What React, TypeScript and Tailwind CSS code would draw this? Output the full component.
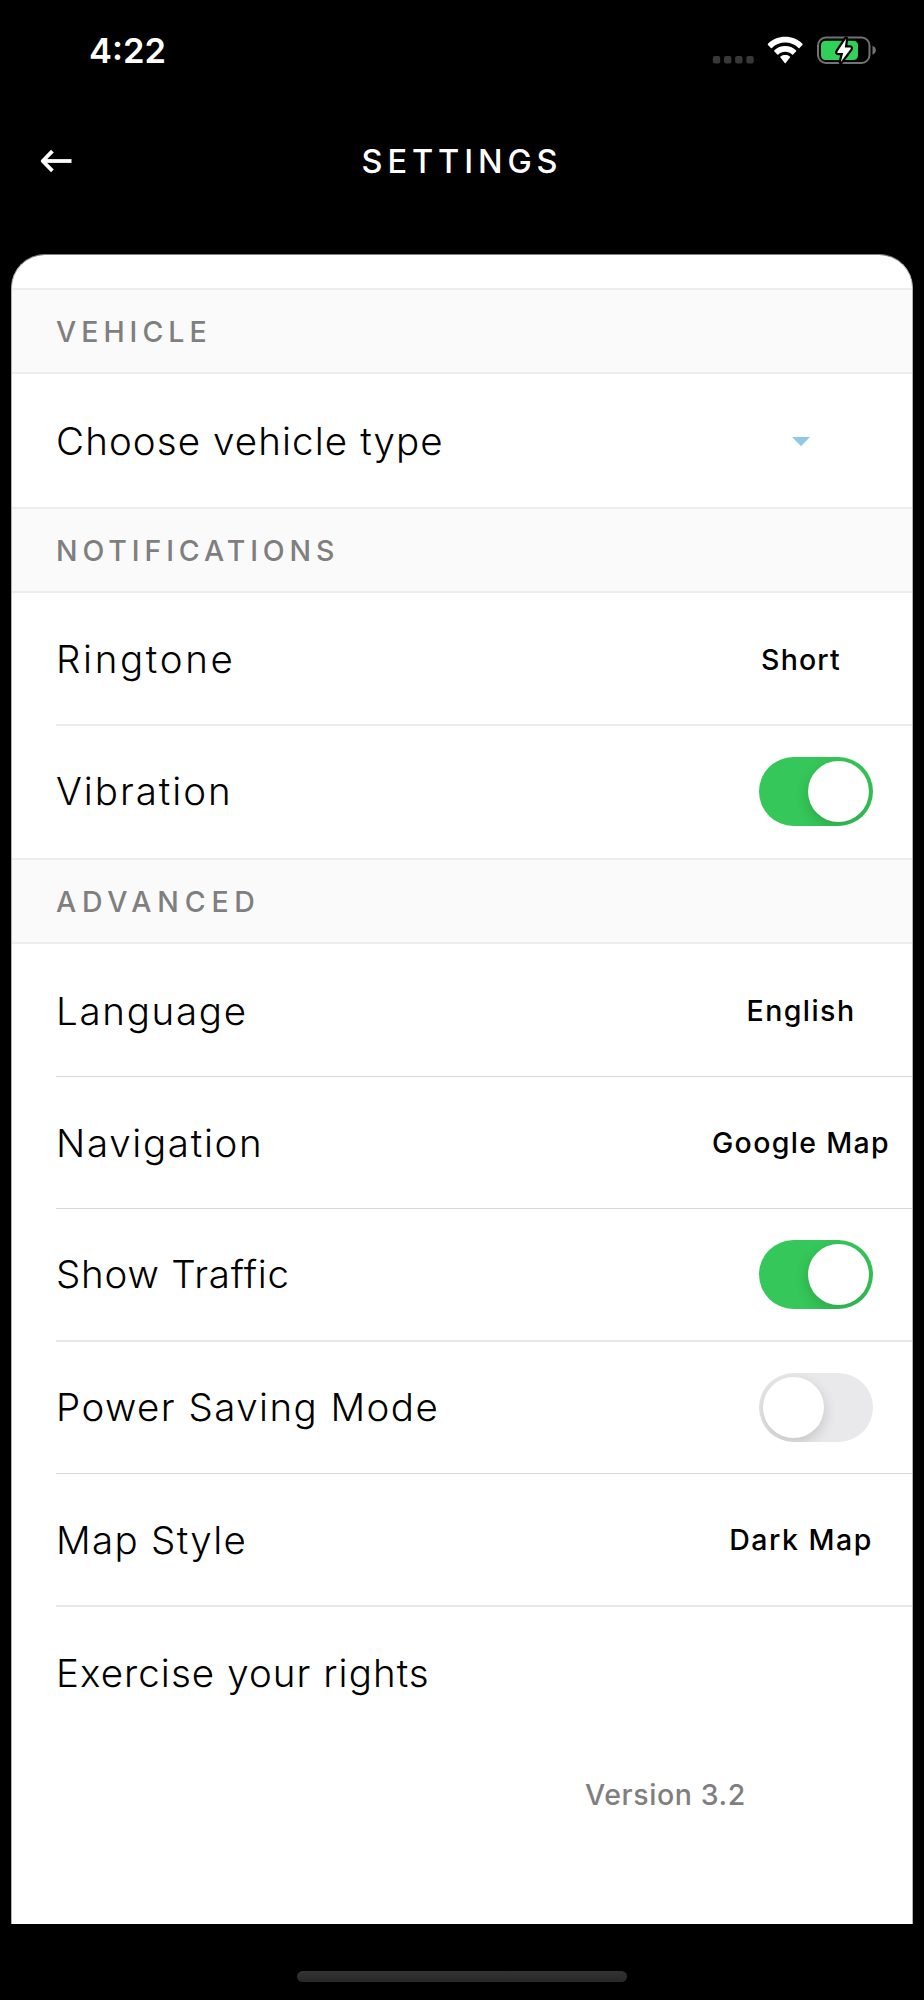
import { ReactNode, useState } from "react";
import { clsx } from "clsx";

function StatusBar() {
  return (
    <div className="flex h-[101px] items-center justify-between pl-[89px] pr-[48px] text-white">
      <span className="pt-0.5 text-[34.5px] font-semibold leading-none">4:22</span>
      <svg width="164" height="32" viewBox="712 35 164 32" fill="none">
        {/* signal */}
        <g fill="#383838">
          <rect x="712.8" y="56" width="7.4" height="7.4" rx="2" />
          <rect x="724" y="56" width="7.4" height="7.4" rx="2" />
          <rect x="735.1" y="56" width="7.4" height="7.4" rx="2" />
          <rect x="746.3" y="56" width="7.4" height="7.4" rx="2" />
        </g>
        {/* wifi */}
        <g fill="#fff">
          <path d="M785.2 42.6C790.4 42.6 795 44.6 798.5 47.9C798.8 48.2 799.2 48.2 799.5 47.9L802.4 45C802.8 44.6 802.8 44.1 802.4 43.7C797.9 39.4 791.9 36.8 785.2 36.8C778.5 36.8 772.5 39.4 768 43.7C767.6 44.1 767.6 44.6 768 45L770.9 47.9C771.2 48.2 771.6 48.2 771.9 47.9C775.4 44.6 780 42.6 785.2 42.6Z" />
          <path d="M785.2 51.8C787.9 51.8 790.3 52.8 792.1 54.4C792.4 54.7 792.8 54.7 793.1 54.4L796 51.5C796.4 51.1 796.4 50.6 796 50.2C793.2 47.6 789.4 46 785.2 46C781 46 777.2 47.6 774.4 50.2C774 50.6 774 51.1 774.4 51.5L777.3 54.4C777.6 54.7 778 54.7 778.3 54.4C780.1 52.8 782.5 51.8 785.2 51.8Z" />
          <path d="M789.9 57.6C790.3 57.2 790.3 56.7 789.8 56.4C788.5 55.5 786.9 55 785.2 55C783.5 55 781.9 55.5 780.6 56.4C780.1 56.7 780.1 57.2 780.5 57.6L784.7 62.9C785 63.2 785.4 63.2 785.7 62.9Z" />
        </g>
        {/* battery */}
        <rect x="818" y="37.5" width="51.5" height="25.5" rx="8" stroke="#737373" strokeWidth="2" />
        <rect x="821" y="40.8" width="37" height="19.2" rx="4.5" fill="#30d158" />
        <path d="M872.5 45.8C874.6 46.6 875.8 48.3 875.8 50.3C875.8 52.3 874.6 54 872.5 54.8Z" fill="#737373" />
        <path
          d="M846 38.8L837.4 51.7C837 52.3 837.3 52.9 838 52.9H843.2L840.8 62L850.6 48.9C851.1 48.2 850.8 47.6 850 47.6H844.8Z"
          fill="#fff"
          stroke="#000"
          strokeWidth="4.5"
          strokeLinejoin="round"
          paintOrder="stroke"
        />
      </svg>
    </div>
  );
}

function Header() {
  return (
    <header className="grid h-[121px] grid-cols-[1fr_auto_1fr] items-center px-10 text-white">
      <button type="button" aria-label="Back" className="w-8 pb-0.5">
        <svg width="32" height="24" viewBox="0 0 32 24" fill="none" stroke="currentColor" strokeWidth="3.8">
          <path d="M31.5 12H3" />
          <path d="M12.4 2.2L2.7 12L12.4 21.8" strokeLinejoin="round" />
        </svg>
      </button>
      <h1 className="pt-0.5 text-[32.5px] font-medium leading-none tracking-[4.9px]">SETTINGS</h1>
    </header>
  );
}

function SectionTitle({ children, className }: { children: ReactNode; className?: string }) {
  return (
    <h2
      className={clsx(
        "flex h-[86px] items-center border-y-2 border-[#ededed] bg-[#fafafa] pl-11 pt-0.5",
        "text-[28.5px] font-medium leading-none text-[#7f7f7f]",
        className
      )}
    >
      {children}
    </h2>
  );
}

interface RowProps {
  label: string;
  /** Height, divider and letter spacing of the row */
  className?: string;
  children?: ReactNode;
}

function Row({ label, className, children }: RowProps) {
  return (
    <div
      className={clsx(
        "ml-11 flex items-center justify-between text-[38.5px] font-light leading-none text-black",
        className
      )}
    >
      <span>{label}</span>
      <div className="flex w-[222px] justify-center">{children}</div>
    </div>
  );
}

function Value({ children, className }: { children: ReactNode; className: string }) {
  return (
    <span className={clsx("whitespace-nowrap pt-px text-[28.5px] font-medium", className)}>{children}</span>
  );
}

function Toggle({ label, defaultOn = false }: { label: string; defaultOn?: boolean }) {
  const [on, setOn] = useState(defaultOn);

  return (
    <button
      type="button"
      role="switch"
      aria-label={label}
      aria-checked={on}
      onClick={() => setOn(!on)}
      className={clsx(
        "ml-[30px] flex h-[69px] w-[114px] items-center overflow-hidden rounded-full px-1",
        on ? "justify-end bg-[#35c759]" : "justify-start bg-[#e9e9eb]"
      )}
    >
      <span className="size-[61px] rounded-full bg-white shadow-[0_5px_14px_rgba(0,0,0,0.16)]" />
    </button>
  );
}

export default function App() {
  return (
    <div className="flex h-[2000px] w-[924px] flex-col bg-black font-['Inter',sans-serif]">
      <StatusBar />
      <Header />

      <main className="ml-[11px] mt-8 h-[1670px] w-[902px] overflow-hidden rounded-t-[34px] border-x border-t border-x-[#b0b0b0] border-t-[#808080] bg-white pt-[33px]">
        <SectionTitle className="tracking-[5px]">VEHICLE</SectionTitle>
        <Row label="Choose vehicle type" className="h-[133px] pt-px tracking-[1.1px]">
          <svg width="18" height="10" viewBox="0 0 18 10" className="mt-px">
            <path d="M0 0H18L9 9.3Z" fill="#8ecae6" />
          </svg>
        </Row>

        <SectionTitle className="tracking-[4.9px]">NOTIFICATIONS</SectionTitle>
        <Row label="Ringtone" className="h-[133px] border-b-2 border-[#ebebeb] pt-0.5 tracking-[2.65px]">
          <Value className="tracking-[1.18px]">Short</Value>
        </Row>
        <Row label="Vibration" className="h-[132px] pb-0.5 tracking-[1.95px]">
          <Toggle label="Vibration" defaultOn />
        </Row>

        <SectionTitle className="tracking-[5.8px]">ADVANCED</SectionTitle>
        <Row label="Language" className="h-[133px] border-b border-[#d6d6d6] pt-0.5 tracking-[1.7px]">
          <Value className="tracking-[1.45px]">English</Value>
        </Row>
        <Row label="Navigation" className="h-[132px] border-b border-[#d6d6d6] pt-px tracking-[1.7px]">
          <Value className="tracking-[1.33px]">Google Map</Value>
        </Row>
        <Row label="Show Traffic" className="h-[133px] border-b-2 border-[#e8e8e8] tracking-[0.77px]">
          <Toggle label="Show Traffic" defaultOn />
        </Row>
        <Row label="Power Saving Mode" className="h-[132px] border-b border-[#d6d6d6] tracking-[1.44px]">
          <Toggle label="Power Saving Mode" />
        </Row>
        <Row label="Map Style" className="h-[133px] border-b-2 border-[#e8e8e8] pt-px tracking-[1.32px]">
          <Value className="tracking-[1.5px]">Dark Map</Value>
        </Row>
        <Row label="Exercise your rights" className="h-[132px] tracking-[1.07px]" />

        <p className="flex h-[112px] items-center pl-[573px] text-[28.5px] font-medium leading-none tracking-[0.6px] text-[#7f7f7f]">
          Version 3.2
        </p>
      </main>

      <div className="ml-[297px] mt-[47px] h-[11px] w-[330px] rounded-full bg-linear-to-b from-[#333] to-[#282828]" />
    </div>
  );
}
